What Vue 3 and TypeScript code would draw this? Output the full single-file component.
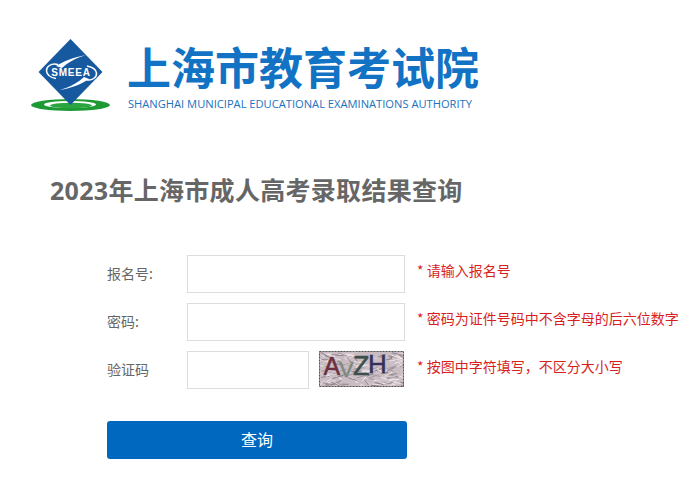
<template>
  <div class="page">
    <div class="header">
      <svg class="logo" width="82" height="74" viewBox="0 0 82 74">
        <ellipse cx="41.500" cy="66" rx="39.500" ry="6" fill="#1e9a35" />
        <ellipse cx="41" cy="65.500" rx="26" ry="3.600" fill="#fff" />
        <ellipse cx="42" cy="66.500" rx="21" ry="2.800" fill="#2aa53f" />
        <polygon points="41.500,0 73.500,33 41.500,66 9.500,33" fill="#17599f" />
        <path d="M57 16 C47 19 38 24 33 29 L27 27 C33 23 45 18 57 16Z" fill="#fff" />
        <path d="M29 25.500 C22 23.500 17 28 17.500 32 C18 36 21 38.500 27 39.500" fill="none" stroke="#fff" stroke-width="1.500" />
        <path d="M31 51 C41 48 50 43 55 38 L60 40 C53 45 42 49 31 51Z" fill="#fff" />
        <path d="M57 40.500 C63 42.500 68 38 67.500 34 C67 30 63 28 58 27" fill="none" stroke="#fff" stroke-width="1.500" />
        <text x="42" y="37" class="logo-text" text-anchor="middle">SMEEA</text>
      </svg>
      <div class="brand">
        <div class="brand-cn">上海市教育考试院</div>
        <div class="brand-en">SHANGHAI MUNICIPAL EDUCATIONAL EXAMINATIONS AUTHORITY</div>
      </div>
    </div>

    <h1 class="title">2023年上海市成人高考录取结果查询</h1>

    <form class="form" @submit.prevent>
      <div class="row">
        <label class="label">报名号:</label>
        <input class="input" type="text" />
        <span class="hint">* 请输入报名号</span>
      </div>
      <div class="row">
        <label class="label">密码:</label>
        <input class="input" type="password" />
        <span class="hint">* 密码为证件号码中不含字母的后六位数字</span>
      </div>
      <div class="row">
        <label class="label">验证码</label>
        <input class="input input-code" type="text" />
        <svg class="captcha" width="85" height="36" viewBox="0 0 85 36">
          <rect x="0" y="0" width="85" height="36" fill="#c9bcc2" />
          <line
            v-for="(l, i) in noise"
            :key="i"
            :x1="l.x1"
            :y1="l.y1"
            :x2="l.x2"
            :y2="l.y2"
            :stroke="l.color"
            stroke-width="1"
          />
          <text x="4.500" y="24" class="cap cap-a" fill="#6b2f40" stroke="#6b2f40">A</text>
          <text x="20" y="26" class="cap cap-v" fill="#7d8a80" stroke="#7d8a80">V</text>
          <text x="34" y="24" class="cap cap-z" fill="#3d4f4c" stroke="#3d4f4c">Z</text>
          <text x="49" y="22" class="cap cap-h" fill="#34305c" stroke="#34305c">H</text>
          <rect x="0.500" y="0.500" width="84" height="35" fill="none" stroke="#555" stroke-dasharray="2 1" />
        </svg>
        <span class="hint hint-code">* 按图中字符填写，不区分大小写</span>
      </div>
      <button class="submit" type="button">查询</button>
    </form>
  </div>
</template>

<script setup lang="ts">
interface NoiseLine {
  x1: number
  y1: number
  x2: number
  y2: number
  color: string
}

// 固定种子，保证每次画出来一样
let seed = 17
const rnd = () => {
  seed = (seed * 16807) % 2147483647
  return seed / 2147483647
}

const colors = ['#e8e0e4', '#a89aa2', '#f2ecef', '#8f8289', '#d9cfd4']
const noise: NoiseLine[] = Array.from({ length: 170 }, () => {
  const x = rnd() * 85
  const y = rnd() * 36
  return {
    x1: x,
    y1: y,
    x2: x + 3 + rnd() * 9,
    y2: y - 5 + rnd() * 10,
    color: colors[Math.floor(rnd() * colors.length)]
  }
})
</script>

<style scoped>
.page {
  width: 690px;
  height: 486px;
  overflow: hidden;
  background: #fff;
  font-family: "Noto Sans CJK SC", "Noto Sans", sans-serif;
}

.header {
  display: flex;
  align-items: flex-start;
  padding: 39px 0 0 29px;
  gap: 16px;
}

.logo {
  flex: none;
}

.logo-text {
  font-family: "Liberation Sans", sans-serif;
  font-size: 10px;
  font-weight: 700;
  letter-spacing: 0.8px;
  fill: #fff;
}

.brand-cn {
  font-size: 44px;
  line-height: 50px;
  margin-top: 2px;
  font-weight: 700;
  color: #1272c4;
  white-space: nowrap;
}

.brand-en {
  font-family: "Open Sans", sans-serif;
  font-size: 11.150px;
  line-height: 14px;
  margin: 6px 0 0 1px;
  color: #1a72bd;
  white-space: nowrap;
}

.title {
  margin: 59px 0 0 50px;
  font-size: 25px;
  letter-spacing: 0.3px;
  line-height: 36px;
  font-weight: 700;
  color: #666;
  font-family: "Open Sans", "Noto Sans CJK SC", sans-serif;
}

.form {
  margin: 47px 0 0 107px;
  display: flex;
  flex-direction: column;
  gap: 10px;
}

.row {
  display: flex;
  align-items: center;
  height: 38px;
}

.label {
  width: 80px;
  flex: none;
  margin-top: -2px;
  color: #666;
  font-size: 14px;
}

.input {
  width: 218px;
  height: 38px;
  box-sizing: border-box;
  border: 1px solid #ddd;
  background: #fff;
  padding: 0;
  outline: none;
  flex: none;
}

.input-code {
  width: 122px;
}

.captcha {
  flex: none;
  margin: -2px 0 0 10px;
}

.cap {
  font-family: "Liberation Sans", sans-serif;
  stroke-width: 0.5px;
}

.cap-a {
  font-size: 25px;
}

.cap-v {
  font-size: 22px;
}

.cap-z {
  font-size: 27px;
}

.cap-h {
  font-size: 26px;
}

.hint {
  color: #d81e1e;
  font-size: 14px;
  margin: -8px 0 0 12px;
  white-space: nowrap;
}

.hint-code {
  margin-left: 13px;
}

.submit {
  width: 300px;
  height: 38px;
  margin-top: 22px;
  border: none;
  border-radius: 3px;
  background: #0069bf;
  color: #fff;
  font-family: inherit;
  font-size: 16px;
  padding: 0 0 2px;
}
</style>
